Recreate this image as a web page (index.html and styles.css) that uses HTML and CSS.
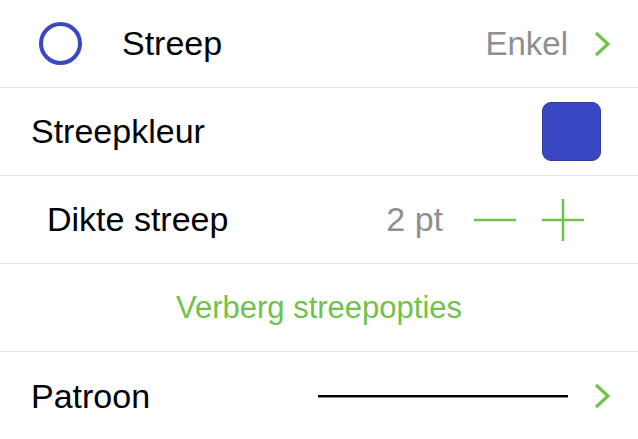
FILE: index.html
```html
<!DOCTYPE html>
<html lang="nl">
<head>
<meta charset="UTF-8">
<meta name="viewport" content="width=device-width, initial-scale=1.0">
<title>Streep</title>
<link rel="stylesheet" href="styles.css">
</head>
<body>
  <div class="list">
    <div class="row row-stroke">
      <span class="ring"></span>
      <span class="label">Streep</span>
      <span class="value">Enkel</span>
      <svg class="chevron" width="16" height="26" viewBox="0 0 16 26">
        <path d="M2 2 L14 13 L2 24" fill="none" stroke="#6fc24a" stroke-width="3.2"/>
      </svg>
    </div>

    <div class="row row-color">
      <span class="label">Streepkleur</span>
      <span class="swatch"></span>
    </div>

    <div class="row row-width">
      <span class="label">Dikte streep</span>
      <span class="value">2 pt</span>
      <svg class="stepper" width="42" height="42" viewBox="0 0 42 42">
        <path d="M0 21 H42" stroke="#6fc24a" stroke-width="2.5"/>
      </svg>
      <svg class="stepper" width="42" height="42" viewBox="0 0 42 42">
        <path d="M0 21 H42 M21 0 V42" stroke="#6fc24a" stroke-width="2.5"/>
      </svg>
    </div>

    <div class="row row-action">
      <span class="action">Verberg streepopties</span>
    </div>

    <div class="row row-pattern">
      <span class="label">Patroon</span>
      <span class="pattern"></span>
      <svg class="chevron" width="16" height="26" viewBox="0 0 16 26">
        <path d="M2 2 L14 13 L2 24" fill="none" stroke="#6fc24a" stroke-width="3.2"/>
      </svg>
    </div>
  </div>
</body>
</html>
```

FILE: styles.css
```css
body {
margin: 0;
padding: 0;
background-color: #fff;
font-family: "Liberation Sans", Arial, sans-serif;
color: #000;
}

.list {
width: 638px;
}

.row {
display: flex;
align-items: center;
height: 87px;
border-bottom: 1px solid #e2e2e2;
padding: 0 28px 0 31px;
font-size: 34px;
}

.row-pattern {
border-bottom: none;
height: 88px;
}

.label {
flex: 1;
}

.value {
color: #8e8e93;
font-size: 33px;
}

.chevron {
margin-left: 26px;
}

.ring {
width: 35px;
height: 35px;
border: 4px solid #3b48c4;
border-radius: 50%;
margin: 0 40px 0 8px;
}

.row-color {
padding-right: 37px;
}

.swatch {
width: 57px;
height: 57px;
border-radius: 9px;
background-color: #3a47c2;
border: 1px solid #30389a;
}

.row-width {
padding-left: 47px;
padding-right: 54px;
}

.row-width .value {
margin-right: 31px;
font-size: 34px;
}

.stepper + .stepper {
margin-left: 26px;
}

.row-action {
justify-content: center;
padding: 0;
}

.action {
color: #6fc24a;
font-size: 31px;
}

.pattern {
width: 250px;
height: 2px;
background-color: #000;
border-bottom: 1px solid #8a8a8a;
}
```
